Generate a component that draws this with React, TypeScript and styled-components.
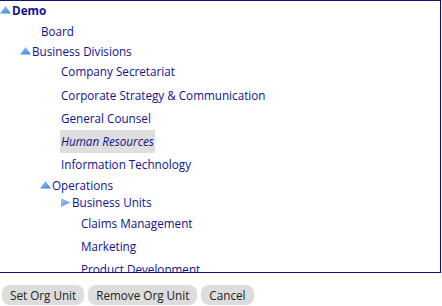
import { ReactElement } from "react";
import styled, { createGlobalStyle } from "styled-components";

interface ITreeRow {
  label: string;
  indent: number;
  toggle?: "open" | "closed";
  bold?: boolean;
  selected?: boolean;
}

const rows: Array<ITreeRow> = [
  { label: "Demo", indent: 0, toggle: "open", bold: true },
  { label: "Board", indent: 40 },
  { label: "Business Divisions", indent: 20, toggle: "open" },
  { label: "Company Secretariat", indent: 60 },
  { label: "Corporate Strategy & Communication", indent: 60 },
  { label: "General Counsel", indent: 60 },
  { label: "Human Resources", indent: 60, selected: true },
  { label: "Information Technology", indent: 60 },
  { label: "Operations", indent: 40, toggle: "open" },
  { label: "Business Units", indent: 60, toggle: "closed" },
  { label: "Claims Management", indent: 80 },
  { label: "Marketing", indent: 80 },
  { label: "Product Development", indent: 80 },
];

const UpArrow = (): ReactElement => (
  <svg width="12" height="8" viewBox="0 0 12 8">
    <defs>
      <linearGradient id="upg" x1="0" y1="0" x2="0.6" y2="1">
        <stop offset="0" stopColor="#9fd0f8" />
        <stop offset="1" stopColor="#3f8fe6" />
      </linearGradient>
    </defs>
    <polygon points="5.5,0 11,7.5 0,7.5" fill="url(#upg)" />
  </svg>
);

const RightArrow = (): ReactElement => (
  <svg width="12" height="10" viewBox="0 0 12 10">
    <defs>
      <linearGradient id="rtg" x1="0" y1="0" x2="1" y2="1">
        <stop offset="0" stopColor="#9fd0f8" />
        <stop offset="1" stopColor="#3f8fe6" />
      </linearGradient>
    </defs>
    <polygon points="1,0 10,4.5 1,9" fill="url(#rtg)" />
  </svg>
);

const App = (): ReactElement => {
  return (
    <>
      <GlobalStyle />
      <Page>
        <TreeBox>
          {rows.map((row) =>
            row.toggle ? (
              <BranchRow key={row.label} $indent={row.indent}>
                <ToggleIcon>
                  {row.toggle === "open" ? <UpArrow /> : <RightArrow />}
                </ToggleIcon>
                <BranchLabel $bold={row.bold}>{row.label}</BranchLabel>
              </BranchRow>
            ) : (
              <LeafRow key={row.label} $indent={row.indent}>
                <LeafLink $selected={row.selected}>{row.label}</LeafLink>
              </LeafRow>
            )
          )}
        </TreeBox>
        <ButtonBar>
          <Button>Set Org Unit</Button>
          <Button>Remove Org Unit</Button>
          <Button>Cancel</Button>
        </ButtonBar>
      </Page>
    </>
  );
};

export default App;

const GlobalStyle = createGlobalStyle`
  body {
    margin: 0;
    background: #ffffff;
    font-family: "Open Sans", "Noto Sans", sans-serif;
    font-size: 11.7px;
  }
`;

const Page = styled.div`
  width: 442px;
  height: 306px;
  overflow: hidden;
`;

const TreeBox = styled.div`
  box-sizing: border-box;
  width: 441px;
  height: 273px;
  padding-top: 1px;
  border: 1px solid #10107e;
  border-left: none;
  overflow: hidden;
`;

const BranchRow = styled.div<{ $indent: number }>`
  display: flex;
  align-items: baseline;
  height: 17.5px;
  line-height: 17.5px;
  padding-left: ${(p) => p.$indent}px;
  white-space: nowrap;
`;

const ToggleIcon = styled.span`
  display: inline-flex;
  width: 12px;
  align-self: flex-start;
  margin-top: 4px;
  svg {
    display: block;
  }
`;

const BranchLabel = styled.span<{ $bold?: boolean }>`
  color: #12128a;
  font-weight: ${(p) => (p.$bold ? 700 : 400)};
`;

const LeafRow = styled.div<{ $indent: number }>`
  height: 23.3px;
  line-height: 23.3px;
  padding-left: ${(p) => p.$indent}px;
  white-space: nowrap;
`;

const LeafLink = styled.span<{ $selected?: boolean }>`
  display: inline-block;
  padding: 0 1px;
  color: #12128a;
  font-style: ${(p) => (p.$selected ? "italic" : "normal")};
  background: ${(p) => (p.$selected ? "#dedede" : "transparent")};
`;

const ButtonBar = styled.div`
  display: flex;
  gap: 4px;
  margin-top: 12px;
  padding-left: 2px;
`;

const Button = styled.button`
  box-sizing: border-box;
  height: 20px;
  padding: 0 8px;
  border: none;
  border-radius: 8px;
  background: #dddddd;
  color: #222222;
  font-family: "Open Sans", "Noto Sans", sans-serif;
  font-size: 11.7px;
  line-height: 20px;
  white-space: nowrap;
`;
